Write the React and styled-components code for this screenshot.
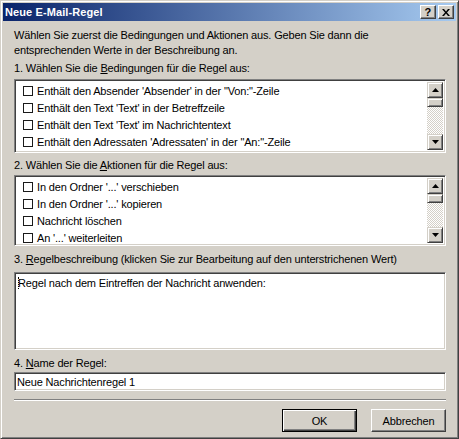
import React from 'react';
import styled, { createGlobalStyle } from 'styled-components';

const GlobalStyle = createGlobalStyle`
  html, body {
    margin: 0;
    padding: 0;
    background: #d4d0c8;
  }
  body {
    font-family: "Liberation Sans", Arial, sans-serif;
    font-size: 11px;
    letter-spacing: -0.16px;
    color: #000;
  }
`

const face = '#d4d0c8';

const StyledWindow = styled.div`
  box-sizing: border-box;
  width: 459px;
  height: 439px;
  display: flex;
  flex-direction: column;
  padding: 2px;
  background: ${face};
  border-top: 1px solid ${face};
  border-left: 1px solid ${face};
  border-right: 1px solid #404040;
  border-bottom: 1px solid #404040;
  box-shadow: inset 1px 1px #fff, inset -1px -1px #808080;
`

const StyledTitleBar = styled.div`
  display: flex;
  align-items: center;
  height: 18px;
  flex-shrink: 0;
  padding: 0 2px;
  background: linear-gradient(to right, #0a246a, #a6caf0);
  color: #fff;
  font-weight: 700;
  font-size: 11px;
  letter-spacing: 0.1px;

  > span {
    flex: 1;
  }
`

const StyledCaptionButton = styled.div`
  box-sizing: border-box;
  display: flex;
  align-items: center;
  justify-content: center;
  width: 16px;
  height: 14px;
  margin-left: ${props => props.gap || 0}px;
  background: ${face};
  border-top: 1px solid #fff;
  border-left: 1px solid #fff;
  border-right: 1px solid #404040;
  border-bottom: 1px solid #404040;
  box-shadow: inset -1px -1px #808080;
  color: #000;
  font-weight: 700;
  font-size: 11px;
  line-height: 12px;
`

const StyledContent = styled.div`
  display: flex;
  flex-direction: column;
  padding: 0 10px 0 11px;
`

const StyledIntro = styled.p`
  margin: 7px 0 0;
  line-height: 15px;
`

const StyledLabel = styled.div`
  margin-top: ${props => props.top}px;
  line-height: 14px;
  white-space: nowrap;
`

const StyledSunken = styled.div`
  box-sizing: border-box;
  position: relative;
  display: flex;
  margin-top: ${props => props.top}px;
  height: ${props => props.height}px;
  background: #fff;
  border-top: 1px solid #808080;
  border-left: 1px solid #808080;
  border-right: 1px solid #fff;
  border-bottom: 1px solid #fff;
  box-shadow: inset 1px 1px #404040, inset -1px -1px ${face};
  padding: 2px;
  overflow: hidden;
`

const StyledList = styled.div`
  flex: 1;
  padding-top: ${props => props.pad}px;
  overflow: hidden;
`

const StyledRow = styled.div`
  display: flex;
  align-items: center;
  height: 17px;
  padding-left: 6px;
  white-space: nowrap;
`

const StyledCheck = styled.span`
  box-sizing: border-box;
  width: 10px;
  height: 10px;
  margin-right: 4px;
  border: 1px solid #1a1a1a;
  background: #fff;
  flex-shrink: 0;
`

const StyledScrollbar = styled.div`
  display: flex;
  flex-direction: column;
  width: 16px;
  flex-shrink: 0;
  background: repeating-conic-gradient(${face} 0 25%, #fff 0 50%) 0 0 / 2px 2px;
`

const StyledScrollButton = styled.div`
  box-sizing: border-box;
  display: flex;
  align-items: center;
  justify-content: center;
  height: ${props => props.h}px;
  background: ${face};
  border-top: 1px solid ${face};
  border-left: 1px solid ${face};
  border-right: 1px solid #404040;
  border-bottom: 1px solid #404040;
  box-shadow: inset 1px 1px #fff, inset -1px -1px #808080;
`

const StyledTrack = styled.div`
  flex: 1;
`

const StyledDescription = styled.div`
  flex: 1;
  padding: 1px 0 0 1px;
  line-height: 14px;
  white-space: nowrap;
`

const StyledCaret = styled.span`
  display: inline-block;
  width: 0;
  height: 12px;
  margin-right: -1px;
  vertical-align: -2px;
  border-left: 1px dotted #000;
`

const StyledInput = styled.div`
  box-sizing: border-box;
  margin-top: 2px;
  height: 19px;
  padding: 0 2px;
  display: flex;
  align-items: center;
  background: #fff;
  border-top: 1px solid #808080;
  border-left: 1px solid #808080;
  border-right: 1px solid #fff;
  border-bottom: 1px solid #fff;
  box-shadow: inset 1px 1px #404040, inset -1px -1px ${face};
  white-space: nowrap;
`

const StyledSeparator = styled.div`
  margin-top: 8px;
  border-top: 1px solid #808080;
  border-bottom: 1px solid #fff;
`

const StyledButtonRow = styled.div`
  display: flex;
  justify-content: flex-end;
  gap: 14px;
  margin-top: 8px;
`

const StyledButton = styled.div`
  box-sizing: border-box;
  display: flex;
  align-items: center;
  justify-content: center;
  width: 75px;
  height: 23px;
  background: ${face};
  border-top: 1px solid ${props => props.primary ? '#000' : '#fff'};
  border-left: 1px solid ${props => props.primary ? '#000' : '#fff'};
  border-right: 1px solid ${props => props.primary ? '#000' : '#404040'};
  border-bottom: 1px solid ${props => props.primary ? '#000' : '#404040'};
  box-shadow: ${props => props.primary
    ? 'inset 1px 1px #fff, inset -1px -1px #404040, inset -2px -2px #808080'
    : 'inset -1px -1px #808080'};
`

const Arrow = ({ down }) => (
  <svg width="7" height="4" viewBox="0 0 7 4">
    <path d={down ? 'M0 0h7L3.5 4z' : 'M0 4h7L3.5 0z'} fill="#000" />
  </svg>
);

const Scrollbar = () => (
  <StyledScrollbar>
    <StyledScrollButton h={16}><Arrow /></StyledScrollButton>
    <StyledScrollButton h={9} />
    <StyledTrack />
    <StyledScrollButton h={16}><Arrow down /></StyledScrollButton>
  </StyledScrollbar>
);

const CheckList = ({ items, height, top, pad }) => (
  <StyledSunken height={height} top={top}>
    <StyledList pad={pad}>
      {items.map(item => (
        <StyledRow key={item}>
          <StyledCheck />
          {item}
        </StyledRow>
      ))}
    </StyledList>
    <Scrollbar />
  </StyledSunken>
);

const conditions = [
  "Enthält den Absender 'Absender' in der \"Von:\"-Zeile",
  "Enthält den Text 'Text' in der Betreffzeile",
  "Enthält den Text 'Text' im Nachrichtentext",
  "Enthält den Adressaten 'Adressaten' in der \"An:\"-Zeile",
];

const actions = [
  "In den Ordner '...' verschieben",
  "In den Ordner '...' kopieren",
  "Nachricht löschen",
  "An '...' weiterleiten",
];

export default function App() {
  return (
    <>
      <GlobalStyle />
      <StyledWindow>
        <StyledTitleBar>
          <span>Neue E-Mail-Regel</span>
          <StyledCaptionButton>?</StyledCaptionButton>
          <StyledCaptionButton gap={2}>
            <svg width="8" height="7" viewBox="0 0 8 7">
              <path d="M0 0h2l2 2.5L6 0h2L5 3.5 8 7H6L4 4.5 2 7H0l3-3.5z" fill="#000" />
            </svg>
          </StyledCaptionButton>
        </StyledTitleBar>
        <StyledContent>
          <StyledIntro>
            Wählen Sie zuerst die Bedingungen und Aktionen aus. Geben Sie dann die<br />
            entsprechenden Werte in der Beschreibung an.
          </StyledIntro>
          <StyledLabel top={3}>
            1. Wählen Sie die <u>B</u>edingungen für die Regel aus:
          </StyledLabel>
          <CheckList items={conditions} height={74} top={4} pad={0} />
          <StyledLabel top={5}>
            2. Wählen Sie die <u>A</u>ktionen für die Regel aus:
          </StyledLabel>
          <CheckList items={actions} height={71} top={3} pad={0} />
          <StyledLabel top={6}>
            3. <u>R</u>egelbeschreibung (klicken Sie zur Bearbeitung auf den unterstrichenen Wert)
          </StyledLabel>
          <StyledSunken height={78} top={6}>
            <StyledDescription>
              <StyledCaret />Regel nach dem Eintreffen der Nachricht anwenden:
            </StyledDescription>
          </StyledSunken>
          <StyledLabel top={6}>
            4. <u>N</u>ame der Regel:
          </StyledLabel>
          <StyledInput>Neue Nachrichtenregel 1</StyledInput>
          <StyledSeparator />
          <StyledButtonRow>
            <StyledButton primary>OK</StyledButton>
            <StyledButton>Abbrechen</StyledButton>
          </StyledButtonRow>
        </StyledContent>
      </StyledWindow>
    </>
  );
}
